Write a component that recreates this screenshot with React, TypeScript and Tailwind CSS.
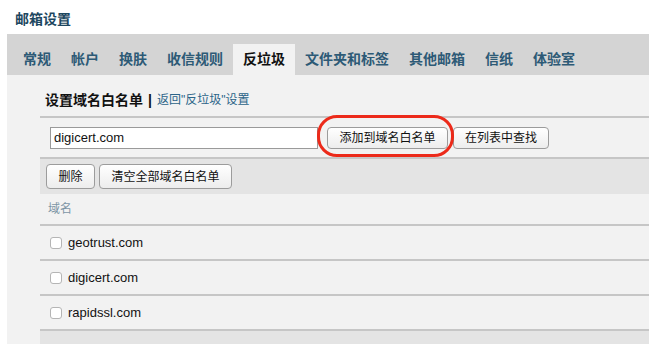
import React from "react";

const tabs = ["常规", "帐户", "换肤", "收信规则", "反垃圾", "文件夹和标签", "其他邮箱", "信纸", "体验室"];
const rows = ["geotrust.com", "digicert.com", "rapidssl.com"];

const btn =
  "h-[22px] px-[11px] text-[12px] text-[#111] rounded-[4px] border border-[#9c9c9c] bg-gradient-to-b from-white to-[#ededed] flex items-center justify-center whitespace-nowrap";

export default function App() {
  return (
    <div
      className="w-[649px] h-[344px] bg-white overflow-hidden"
      style={{ fontFamily: '"Liberation Sans", "Noto Sans CJK SC", sans-serif' }}
    >
      <div className="h-[34px] pl-[15px] pt-[4px] flex items-center">
        <span className="text-[14px] font-bold text-[#1d4760] leading-none">邮箱设置</span>
      </div>
      <div className="ml-[7px] bg-[#d4d4d4] h-[41px] pl-[6px] flex items-end">
        {tabs.map((t) => (
          <div
            key={t}
            className={
              "h-[31px] px-[10px] flex items-center text-[14px] font-bold whitespace-nowrap " +
              (t === "反垃圾" ? "bg-[#f2f2f2] text-[#111]" : "text-[#2d5a76]")
            }
          >
            {t}
          </div>
        ))}
      </div>
      <div className="ml-[7px] bg-[#f2f2f2] h-[269px] pl-[33px]">
        <div className="h-[41px] flex items-center pl-[5px] pt-[9px]">
          <span className="text-[14px] font-bold text-[#111]">设置域名白名单</span>
          <span className="text-[14px] font-bold text-[#111] mx-[5px]">|</span>
          <span className="text-[12px] text-[#2b6488]">返回"反垃圾"设置</span>
        </div>
        <div className="h-[2px] bg-[#c6c6c6]" />
        <div className="relative h-[39px] flex items-center pl-[10px]">
          <div className="w-[268px] h-[22px] bg-white border border-[#9a9a9a] flex items-center pl-[3px] text-[13px] text-[#111]">
            digicert.com
          </div>
          <div className={btn + " ml-[9px] w-[121px]"}>添加到域名白名单</div>
          <div className={btn + " ml-[5px] w-[96px]"}>在列表中查找</div>
          <div className="absolute left-[277px] top-[-3px] w-[137px] h-[42px] rounded-[20px] border-[3px] border-[#ec2a1a]" />
        </div>
        <div className="h-[2px] bg-[#c6c6c6]" />
        <div className="h-[35px] bg-[#e4e4e4] flex items-center pl-[6px] gap-[4px]">
          <div className={btn + " h-[25px] w-[49px]"}>删除</div>
          <div className={btn + " h-[25px] w-[133px]"}>清空全部域名白名单</div>
        </div>
        <div className="h-[30px] flex items-center pl-[8px] text-[12px] text-[#7d95a5]">域名</div>
        {rows.map((r) => (
          <div key={r} className="h-[35px] border-t-2 border-[#c6c6c6] flex items-center pl-[10px]">
            <div className="w-[12px] h-[12px] bg-white border border-[#b5b5b5] rounded-[3px]" />
            <span className="ml-[6px] text-[13px] text-[#111]">{r}</span>
          </div>
        ))}
        <div className="h-[20px] border-t-2 border-[#c6c6c6] bg-[#e4e4e4]" />
      </div>
    </div>
  );
}
